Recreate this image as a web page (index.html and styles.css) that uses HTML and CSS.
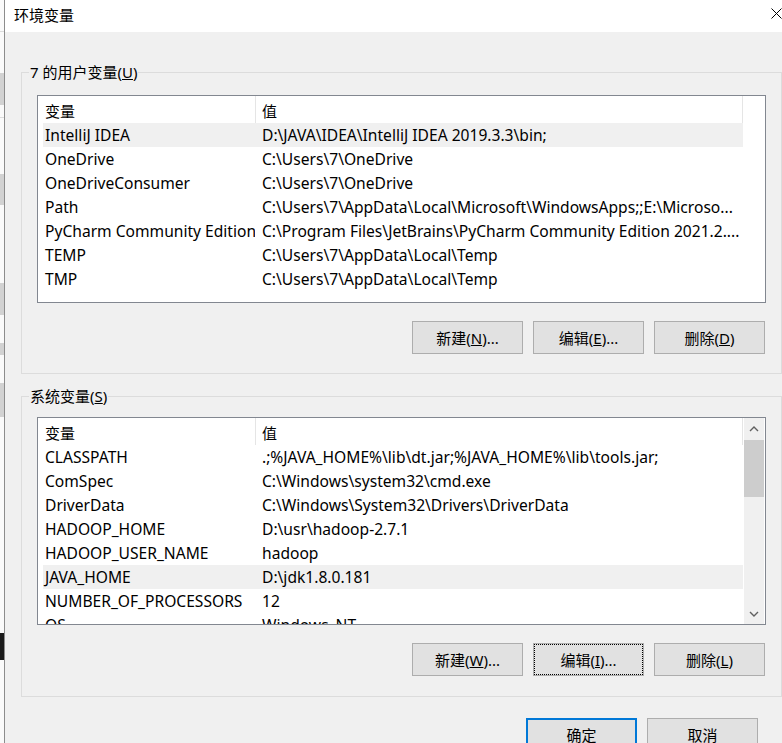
FILE: index.html
```html
<!DOCTYPE html>
<html>
<head>
<meta charset="utf-8">
<link rel="stylesheet" href="styles.css">
</head>
<body>
    <div class="screen">
        <div class="behind"></div>
        <div class="dialog">
            <div class="titlebar">
                <span class="title">环境变量</span>
                <div class="close">
                    <svg width="11" height="11" viewBox="0 0 11 11"><path d="M0.5 0.5L10.5 10.5M10.5 0.5L0.5 10.5" stroke="#000" stroke-width="1" fill="none"/></svg>
                </div>
            </div>
            <div class="body">
                <fieldset class="group user-group">
                    <legend>7 的用户变量(<u>U</u>)</legend>
                    <div class="group-inner">
                        <div class="list">
                            <div class="list-main">
                                <div class="list-head">
                                    <div class="head-name">变量</div>
                                    <div class="head-value">值</div>
                                </div>
                                <div class="rows">
                                    <div class="row selected"><div class="cell-name">IntelliJ IDEA</div><div class="cell-value">D:\JAVA\IDEA\IntelliJ IDEA 2019.3.3\bin;</div></div>
                                    <div class="row"><div class="cell-name">OneDrive</div><div class="cell-value">C:\Users\7\OneDrive</div></div>
                                    <div class="row"><div class="cell-name">OneDriveConsumer</div><div class="cell-value">C:\Users\7\OneDrive</div></div>
                                    <div class="row"><div class="cell-name">Path</div><div class="cell-value">C:\Users\7\AppData\Local\Microsoft\WindowsApps;;E:\Microso...</div></div>
                                    <div class="row"><div class="cell-name">PyCharm Community Edition</div><div class="cell-value">C:\Program Files\JetBrains\PyCharm Community Edition 2021.2....</div></div>
                                    <div class="row"><div class="cell-name">TEMP</div><div class="cell-value">C:\Users\7\AppData\Local\Temp</div></div>
                                    <div class="row"><div class="cell-name">TMP</div><div class="cell-value">C:\Users\7\AppData\Local\Temp</div></div>
                                </div>
                            </div>
                        </div>
                        <div class="buttons">
                            <button>新建(<u>N</u>)...</button>
                            <button>编辑(<u>E</u>)...</button>
                            <button>删除(<u>D</u>)</button>
                        </div>
                    </div>
                </fieldset>

                <fieldset class="group system-group">
                    <legend>系统变量(<u>S</u>)</legend>
                    <div class="group-inner">
                        <div class="list">
                            <div class="list-main">
                                <div class="list-head">
                                    <div class="head-name">变量</div>
                                    <div class="head-value">值</div>
                                </div>
                                <div class="rows">
                                    <div class="row"><div class="cell-name">CLASSPATH</div><div class="cell-value">.;%JAVA_HOME%\lib\dt.jar;%JAVA_HOME%\lib\tools.jar;</div></div>
                                    <div class="row"><div class="cell-name">ComSpec</div><div class="cell-value">C:\Windows\system32\cmd.exe</div></div>
                                    <div class="row"><div class="cell-name">DriverData</div><div class="cell-value">C:\Windows\System32\Drivers\DriverData</div></div>
                                    <div class="row"><div class="cell-name">HADOOP_HOME</div><div class="cell-value">D:\usr\hadoop-2.7.1</div></div>
                                    <div class="row"><div class="cell-name">HADOOP_USER_NAME</div><div class="cell-value">hadoop</div></div>
                                    <div class="row selected"><div class="cell-name">JAVA_HOME</div><div class="cell-value">D:\jdk1.8.0.181</div></div>
                                    <div class="row"><div class="cell-name">NUMBER_OF_PROCESSORS</div><div class="cell-value">12</div></div>
                                    <div class="row"><div class="cell-name">OS</div><div class="cell-value">Windows_NT</div></div>
                                </div>
                            </div>
                            <div class="scrollbar">
                                <div class="arrow">
                                    <svg width="10" height="6" viewBox="0 0 10 6"><polyline points="1,5 5,1 9,5" stroke="#606060" stroke-width="1.4" fill="none"/></svg>
                                </div>
                                <div class="track"><div class="thumb"></div></div>
                                <div class="arrow">
                                    <svg width="10" height="6" viewBox="0 0 10 6"><polyline points="1,1 5,5 9,1" stroke="#606060" stroke-width="1.4" fill="none"/></svg>
                                </div>
                            </div>
                        </div>
                        <div class="buttons">
                            <button>新建(<u>W</u>)...</button>
                            <button class="focused">编辑(<u>I</u>)...</button>
                            <button>删除(<u>L</u>)</button>
                        </div>
                    </div>
                </fieldset>

                <div class="dialog-buttons">
                    <button class="default">确定</button>
                    <button>取消</button>
                </div>
            </div>
        </div>
    </div>
</body>
</html>
```

FILE: styles.css
```css
html, body {
    margin: 0;
    overflow: hidden;
}
body {
    font-family: "Noto Sans", "Noto Sans CJK SC", sans-serif;
    font-size: 15px;
    color: #000;
    background: #fff;
}

.screen {
    display: flex;
    width: 800px;
    height: 743px;
}

/* window behind the dialog, only a sliver shows */
.behind {
    width: 4px;
    flex: none;
    background: linear-gradient(to bottom,
        #fafafa 0 31px, #dcdcdc 31px 32px, #fafafa 32px 73px,
        #d2d2d2 73px 105px, #fafafa 105px 117px, #dcdcdc 117px 118px,
        #fafafa 118px 174px, #d2d2d2 174px 205px, #fafafa 205px 283px,
        #d2d2d2 283px 315px, #fafafa 315px 343px, #d2d2d2 343px 355px,
        #fafafa 355px 383px, #d2d2d2 383px 417px, #fafafa 417px 633px,
        #1a1a1a 633px 660px, #fafafa 660px);
}

.dialog {
    width: 795px;
    flex: none;
    border-left: 1px solid #8c8c8c;
    box-sizing: border-box;
    background: #f0f0f0;
    display: flex;
    flex-direction: column;
}

.titlebar {
    height: 32px;
    background: #fff;
    display: flex;
    align-items: center;
    justify-content: space-between;
}
.title {
    padding-left: 9px;
    padding-bottom: 4px;
}
.close {
    width: 46px;
    height: 32px;
    display: flex;
    align-items: center;
    justify-content: center;
    padding-bottom: 6px;
    box-sizing: border-box;
}

.body {
    padding: 30px 17px 0 16px;
}

.group {
    margin: 0;
    padding: 13px 0 19px;
    border: 1px solid #dcdcdc;
    min-width: 0;
}
.group legend {
    padding: 0 1px;
    margin-left: 7px;
    line-height: 20px;
}
.system-group {
    margin-top: 12px;
    padding-top: 11px;
    padding-bottom: 20px;
}
.group-inner {
    padding: 0 15px;
}

.list {
    height: 208px;
    border: 1px solid #828790;
    box-sizing: border-box;
    background: #fff;
    display: flex;
}
.list-main {
    flex: 1;
    min-width: 0;
    overflow: hidden;
}
.list-head {
    display: flex;
    height: 27px;
    line-height: 31px;
    overflow: hidden;
}
.head-name {
    width: 218px;
    padding-left: 7px;
    border-right: 1px solid #e5e5e5;
    box-sizing: border-box;
}
.head-value {
    width: 487px;
    padding-left: 6px;
    border-right: 1px solid #e5e5e5;
    box-sizing: border-box;
}

.rows {
    padding-left: 5px;
}
.row {
    display: flex;
    width: 700px;
    height: 24px;
    line-height: 24px;
    font-size: 15.6px;
    white-space: nowrap;
}
.row.selected {
    background: #f0f0f0;
}
.cell-name {
    width: 212px;
    flex: none;
    padding-left: 2px;
    box-sizing: border-box;
    overflow: hidden;
}
.cell-value {
    flex: 1;
    padding-left: 7px;
    overflow: hidden;
}

.scrollbar {
    width: 20px;
    margin-right: 1px;
    background: #f0f0f0;
    display: flex;
    flex-direction: column;
}
.scrollbar .arrow {
    height: 21px;
    display: flex;
    align-items: center;
    justify-content: center;
}
.scrollbar .track {
    flex: 1;
}
.scrollbar .thumb {
    margin-top: 1px;
    height: 57px;
    background: #cdcdcd;
}

button {
    font: inherit;
    color: #000;
    width: 111px;
    height: 33px;
    padding: 0;
    border: 1px solid #adadad;
    background: #e1e1e1;
    box-sizing: border-box;
}
button.focused {
    outline: 1px dotted #000;
    outline-offset: -2px;
}
button.default {
    border: 2px solid #0078d7;
}

.buttons {
    display: flex;
    justify-content: flex-end;
    gap: 10px;
    margin-top: 18px;
    margin-right: 1px;
}

.dialog-buttons {
    display: flex;
    justify-content: flex-end;
    gap: 10px;
    margin-top: 21px;
    padding-right: 24px;
}
```
